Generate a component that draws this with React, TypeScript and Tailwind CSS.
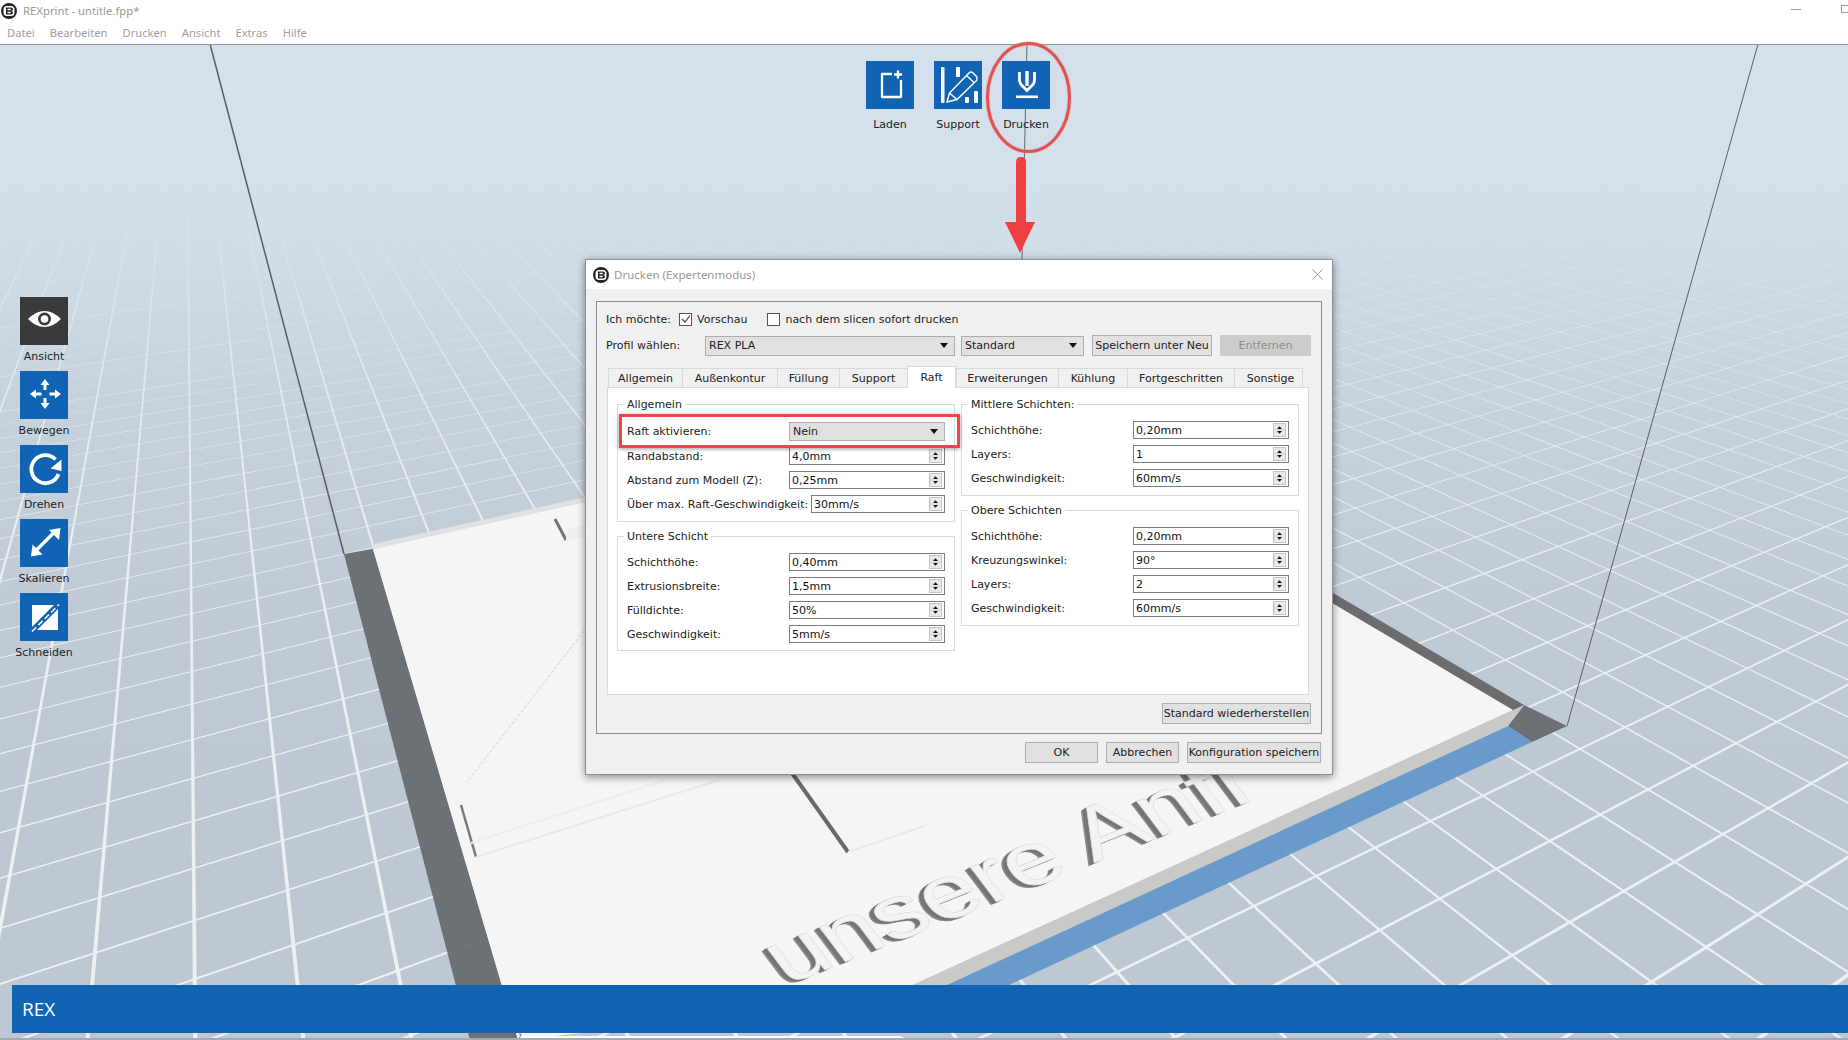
import React from "react";

const VB = { x: 185, y: -85 };
const VA = { x: 3387, y: -122 };
const refY = (t: number) => 790 - 0.0116 * (t - 190);

function wedge(v: { x: number; y: number }, t: number, w: number) {
  const pts = [t - w / 2, t + w / 2].map((x) => {
    const y = refY(x);
    return [v.x + (x - v.x) * 4, v.y + (y - v.y) * 4];
  });
  return `${v.x},${v.y} ${pts[0][0]},${pts[0][1]} ${pts[1][0]},${pts[1][1]}`;
}

const linesB = Array.from({ length: 110 }, (_, i) => 193 + 84 * (i - 20));
const linesA = Array.from({ length: 90 }, (_, i) => 456 + 153 * (i - 70));
const LETTERING = "unsere Anfr";

function Scene() {
  return (
    <svg className="absolute inset-0" width="1848" height="1040" viewBox="0 0 1848 1040">
      <defs>
        <linearGradient id="fog" gradientUnits="userSpaceOnUse" x1="0" y1="0" x2="0" y2="1040">
          <stop offset="0.16" stopColor="#d4e0ec" stopOpacity="1" />
          <stop offset="0.24" stopColor="#d4e0ec" stopOpacity="0.85" />
          <stop offset="0.38" stopColor="#d4e0ec" stopOpacity="0.42" />
          <stop offset="0.58" stopColor="#d4e0ec" stopOpacity="0.1" />
          <stop offset="0.78" stopColor="#d4e0ec" stopOpacity="0" />
        </linearGradient>
      </defs>
      <rect width="1848" height="1040" fill="#bdc8d2" />
      <g fill="#eef1f3">
        {linesB.map((t) => (
          <polygon key={`b${t}`} points={wedge(VB, t, 3.2)} />
        ))}
        {linesA.map((t) => (
          <polygon key={`a${t}`} points={wedge(VA, t, 5)} />
        ))}
      </g>
      <rect width="1848" height="1040" fill="url(#fog)" />

      {/* shadow bands under the plate */}
      <polygon points="344,554 373,549 518,1040 470,1040" fill="#65696d" opacity="0.92" />
      <polygon points="1333,593 1524,705 1513,711 1333,605" fill="#6a6c70" />
      <polygon points="1524,705 1567,726 1532,742 1508,726" fill="#676b70" opacity="0.95" />
      <polygon points="1508,726 1532,742 1009,985 924,985 880,1010" fill="#6196cb" opacity="0.92" />

      {/* plate */}
      <polygon points="373,549 1004,409 1513,710 880,1000 518,1040" fill="#f5f5f5" />
      <polygon points="373,544 1000,405 1004,409 373,549" fill="#dfe1e2" />
      <polygon points="1513,710 1524,705 1508,726 880,1016 880,1000" fill="#c9c9c7" />
      <polygon points="518,1036 900,1036 910,1040 518,1040" fill="#ffffff" />

      {/* shapes on the plate */}
      <line x1="555" y1="519" x2="566" y2="540" stroke="#707274" strokeWidth="3" />
      <polygon points="566,530 590,522 590,536 566,541" fill="#eeeeee" />
      <line x1="584" y1="631" x2="467" y2="782" stroke="#cfcfcf" strokeWidth="1" strokeDasharray="3 2" />
      <line x1="461" y1="805" x2="476" y2="857" stroke="#77797b" strokeWidth="2.500" />
      <line x1="476" y1="857" x2="719" y2="780" stroke="#e9e9e9" strokeWidth="2" />
      <line x1="471" y1="843" x2="666" y2="780" stroke="#ededed" strokeWidth="2" />
      <line x1="792" y1="773" x2="848" y2="852" stroke="#67696b" strokeWidth="4" />
      <line x1="848" y1="852" x2="924" y2="826" stroke="#eaeaea" strokeWidth="2" />

      {/* raised lettering */}
      <g fontFamily="'Liberation Sans', sans-serif" fontSize="60" transform="matrix(1.56,-0.62,0.82,1.09,787,985)">
        <text x="-4" y="0.600" fill="#8a8c8e">{LETTERING}</text>
        <text x="-3" y="0.400" fill="#747678">{LETTERING}</text>
        <text x="-2" y="0.200" fill="#747678">{LETTERING}</text>
        <text x="-1" y="0" fill="#747678">{LETTERING}</text>
        <text x="0" y="0" fill="#f3f3f3" stroke="#e2e2e2" strokeWidth="0.500">{LETTERING}</text>
      </g>

      {/* build volume edges */}
      <line x1="210" y1="44" x2="344" y2="554" stroke="#5a5e62" strokeWidth="1.500" />
      <line x1="1758" y1="44" x2="1567" y2="726" stroke="#5a5e62" strokeWidth="1" />
      <line x1="1027" y1="44" x2="1022" y2="259" stroke="#666a6e" strokeWidth="1" />
    </svg>
  );
}

function Logo({ className }: { className: string }) {
  return (
    <svg className={className} viewBox="0 0 16 16">
      <circle cx="8" cy="8" r="8" fill="#222" />
      <rect x="2.500" y="3" width="11" height="10" rx="3.500" fill="#fff" />
      <path d="M5 4.400h5q2 0 2 1.800t-2 1.800q2 0 2 1.800t-2 1.800H5zM6.600 5.800v1.400h3.200v-1.400zM6.600 8.800v1.400h3.200V8.800z" fill="#222" fillRule="evenodd" />
    </svg>
  );
}

const icons: Record<string, React.ReactNode> = {
  Laden: (
    <g fill="none" stroke="#fff" strokeWidth="2.300">
      <path d="M26 13H16v23h19V19" strokeLinejoin="round" />
      <path d="M32 9.500v8M28 13.500h8" />
    </g>
  ),
  Support: (
    <g>
      <g fill="#fff">
        <rect x="7" y="6" width="3.500" height="36" rx="1" />
        <rect x="22" y="6" width="4" height="10" rx="1" />
        <rect x="31" y="36" width="4" height="6" rx="1" />
        <rect x="40" y="30" width="4" height="12" rx="1" />
      </g>
      <path d="M13 41l2.500-9L35 12q2-2 4 0l3.500 3.500q1.500 2 0 4L23 38.500zM15.500 32l7.500 6.500M32.500 14.500l7.500 7" fill="none" stroke="#fff" strokeWidth="1.400" />
    </g>
  ),
  Drucken: (
    <g>
      <path d="M17.500 11v8q0 4 3.500 6.500l4 4 4-4q3.500-2.500 3.500-6.500v-8" fill="none" stroke="#fff" strokeWidth="2.800" />
      <path d="M25 10v15" stroke="#fff" strokeWidth="3.400" />
      <rect x="14" y="34.500" width="22" height="2.600" fill="#fff" />
    </g>
  ),
  Ansicht: (
    <g>
      <path d="M8 22q8-8 16.500-8T41 22q-8 8-16.500 8T8 22z" fill="#fff" />
      <circle cx="24.500" cy="22" r="6.500" fill="#3a3a3a" />
      <circle cx="24.500" cy="22" r="3.800" fill="#fff" />
    </g>
  ),
  Bewegen: (
    <g fill="#fff">
      <path d="M25 8l4.500 6h-3v5h-3v-5h-3z" />
      <path d="M25 38l4.500-6h-3v-5h-3v5h-3z" />
      <path d="M10 23l6-4.500v3h5.500v3H16v3z" />
      <path d="M41 23l-6-4.500v3h-5.500v3H35v3z" />
    </g>
  ),
  Drehen: (
    <g>
      <path d="M35.500 14.500A14 14 0 1 0 38.500 29" fill="none" stroke="#fff" strokeWidth="3.800" />
      <path d="M41.500 14.500v11.500l-11-2.500z" fill="#fff" />
    </g>
  ),
  Skalieren: (
    <g fill="#fff">
      <path d="M15 32.500l19-19" stroke="#fff" strokeWidth="3.400" />
      <path d="M40.500 9l-1.500 12-10-10z" />
      <path d="M11 37.500l1.500-12 10 10z" />
    </g>
  ),
  Schneiden: (
    <g>
      <path d="M12 12h22L12 34z" fill="#fff" />
      <path d="M38 16v21H17z" fill="#fff" />
      <path d="M12 38.500L39 11.500" stroke="#fff" strokeWidth="1.500" strokeDasharray="6 3" fill="none" />
    </g>
  ),
};

function Tool({ name, dark, mt }: { name: string; dark?: boolean; mt: string }) {
  return (
    <div className="flex flex-col items-center w-[48px]">
      <svg className={dark ? "block w-[48px] h-[48px] bg-[#3a3a3a]" : "block w-[48px] h-[48px] bg-[#1164b4]"} viewBox="0 0 48 48">
        {icons[name]}
      </svg>
      <span className={`whitespace-nowrap text-[11px] leading-[14px] text-[#222] ${mt}`}>{name}</span>
    </div>
  );
}

function Arrow() {
  return (
    <svg className="w-[13px] h-[14px] block bg-[#e9e9e9] border border-[#c6c6c6] shrink-0" viewBox="0 0 11 12">
      <path d="M5.500 2.200L8 5H3z" fill="#111" />
      <path d="M5.500 9.800L8 7H3z" fill="#111" />
      <path d="M0 6h11" stroke="#cfcfcf" strokeWidth="0.600" />
    </svg>
  );
}

function Spin({ value, wide }: { value: string; wide?: boolean }) {
  return (
    <div className={`${wide ? "w-[156px]" : "w-[134px]"} h-[18px] flex items-center justify-between border border-[#7d7d7d] bg-white pl-[2px] pr-[2px] text-[#111]`}>
      <span>{value}</span>
      <Arrow />
    </div>
  );
}

function Row({ label, value, narrow }: { label: string; value: string; narrow?: boolean }) {
  return (
    <div className="flex items-center justify-between h-[18px]">
      <span className="whitespace-nowrap">{label}</span>
      <Spin value={value} wide={!narrow} />
    </div>
  );
}

function Caret() {
  return (
    <svg className="w-[8px] h-[5px] block" viewBox="0 0 8 5">
      <path d="M0 0h8L4 5z" fill="#111" />
    </svg>
  );
}

function Group({ title, h, pt, children }: { title: string; h: string; pt: string; children: React.ReactNode }) {
  return (
    <div className={`relative border border-[#dadada] ${h} ${pt} px-[9px] flex flex-col gap-[6px]`}>
      <span className="absolute left-[6px] -top-[7px] bg-white px-[3px] leading-[13px] whitespace-nowrap">{title}</span>
      {children}
    </div>
  );
}

const tabs: [string, string][] = [
  ["Allgemein", "w-[74px]"],
  ["Außenkontur", "w-[95px]"],
  ["Füllung", "w-[62px]"],
  ["Support", "w-[68px]"],
  ["Raft", "w-[49px]"],
  ["Erweiterungen", "w-[102px]"],
  ["Kühlung", "w-[69px]"],
  ["Fortgeschritten", "w-[107px]"],
  ["Sonstige", "w-[69px] pl-[4px]"],
];

function Btn({ w, children, off }: { w: string; children: React.ReactNode; off?: boolean }) {
  return (
    <div
      className={`${w} h-[21px] flex items-center justify-center whitespace-nowrap ${
        off ? "bg-[#cccccc] text-[#8e8e8e]" : "bg-[#e1e1e1] border border-[#adadad] text-[#222]"
      }`}
    >
      {children}
    </div>
  );
}

function Dialog() {
  return (
    <div className="absolute left-[585px] top-[259px] w-[748px] h-[516px] border border-[#8a939b] bg-[#f0f0f0] shadow-[0_2px_8px_rgba(0,0,0,0.45)] text-[#222] text-[11px] leading-none">
      <div className="h-[29px] bg-white flex items-center pl-[7px] pr-[9px]">
        <Logo className="w-[16px] h-[16px] mr-[5px] block" />
        <span className="text-[#9a9a9a] text-[11.500px] font-['Noto_Sans',sans-serif]">Drucken (Expertenmodus)</span>
        <svg className="ml-auto w-[11px] h-[11px] block" viewBox="0 0 11 11">
          <path d="M0.500 0.500l10 10M10.500 0.500l-10 10" stroke="#777" strokeWidth="0.800" />
        </svg>
      </div>
      <div className="mx-[10px] mt-[12px] border border-[#8c8c8c] pb-[9px]">
        <div className="mt-[9px] h-[16px] pl-[9px] flex items-center">
          <span className="mr-[8px]">Ich möchte:</span>
          <div className="w-[13px] h-[13px] border border-[#555] bg-white flex items-center justify-center">
            <svg className="w-[10px] h-[10px] block" viewBox="0 0 10 10">
              <path d="M1 5l3 3 5-6.500" fill="none" stroke="#444" strokeWidth="1.200" />
            </svg>
          </div>
          <span className="ml-[5px] mr-[20px]">Vorschau</span>
          <div className="w-[13px] h-[13px] border border-[#555] bg-white" />
          <span className="ml-[5px]">nach dem slicen sofort drucken</span>
        </div>
        <div className="mt-[8px] h-[21px] pl-[9px] flex items-center">
          <span className="w-[99px]">Profil wählen:</span>
          <div className="w-[250px] h-[20px] bg-[#e1e1e1] border border-[#adadad] flex items-center justify-between pl-[3px] pr-[6px]">
            <span>REX PLA</span>
            <Caret />
          </div>
          <div className="ml-[6px] w-[123px] h-[20px] bg-[#e1e1e1] border border-[#adadad] flex items-center justify-between pl-[3px] pr-[6px]">
            <span>Standard</span>
            <Caret />
          </div>
          <div className="ml-[8px]">
            <Btn w="w-[120px]">Speichern unter Neu</Btn>
          </div>
          <div className="ml-[8px]">
            <Btn w="w-[91px]" off>
              Entfernen
            </Btn>
          </div>
        </div>
        <div className="mt-[10px] h-[21px] pl-[11px] flex items-end relative z-10">
          {tabs.map(([t, w]) =>
            t === "Raft" ? (
              <div key={t} className={`${w} h-[22px] -mb-[1px] bg-white border border-b-0 border-[#d9d9d9] flex items-center justify-center`}>
                {t}
              </div>
            ) : (
              <div key={t} className={`${w} h-[19px] bg-[#f0f0f0] border border-b-0 border-r-0 last:border-r border-[#d9d9d9] flex items-center justify-center`}>
                {t}
              </div>
            )
          )}
        </div>
        <div className="ml-[10px] w-[702px] h-[308px] bg-white border border-[#d9d9d9] px-[9px] pt-[16px] grid grid-cols-[338px_338px] gap-x-[6px]">
          <div className="flex flex-col gap-[14px]">
            <Group title="Allgemein" h="h-[118px]" pt="pt-[17px]">
              <div className="flex items-center justify-between h-[19px]">
                <span>Raft aktivieren:</span>
                <div className="w-[156px] h-[19px] bg-[#e1e1e1] border border-[#adadad] flex items-center justify-between pl-[3px] pr-[6px]">
                  <span>Nein</span>
                  <Caret />
                </div>
              </div>
              <Row label="Randabstand:" value="4,0mm" />
              <Row label="Abstand zum Modell (Z):" value="0,25mm" />
              <Row label="Über max. Raft-Geschwindigkeit:" value="30mm/s" narrow />
            </Group>
            <Group title="Untere Schicht" h="h-[115px]" pt="pt-[16px]">
              <Row label="Schichthöhe:" value="0,40mm" />
              <Row label="Extrusionsbreite:" value="1,5mm" />
              <Row label="Fülldichte:" value="50%" />
              <Row label="Geschwindigkeit:" value="5mm/s" />
            </Group>
          </div>
          <div className="flex flex-col gap-[14px]">
            <Group title="Mittlere Schichten:" h="h-[92px]" pt="pt-[16px]">
              <Row label="Schichthöhe:" value="0,20mm" />
              <Row label="Layers:" value="1" />
              <Row label="Geschwindigkeit:" value="60mm/s" />
            </Group>
            <Group title="Obere Schichten" h="h-[116px]" pt="pt-[16px]">
              <Row label="Schichthöhe:" value="0,20mm" />
              <Row label="Kreuzungswinkel:" value="90°" />
              <Row label="Layers:" value="2" />
              <Row label="Geschwindigkeit:" value="60mm/s" />
            </Group>
          </div>
        </div>
        <div className="mt-[8px] flex justify-end pr-[10px]">
          <Btn w="w-[149px]">Standard wiederherstellen</Btn>
        </div>
      </div>
      <div className="mt-[8px] pr-[11px] flex justify-end gap-[8px]">
        <Btn w="w-[73px]">OK</Btn>
        <Btn w="w-[73px]">Abbrechen</Btn>
        <Btn w="w-[134px]">Konfiguration speichern</Btn>
      </div>
      <div className="absolute left-[33px] top-[154px] w-[341px] h-[34px] border-[3px] border-[#e8484a] shadow-[0_1px_4px_rgba(0,0,0,0.4)]" />
    </div>
  );
}

export default function App() {
  return (
    <div className="relative w-[1848px] h-[1040px] overflow-hidden font-['DejaVu_Sans',sans-serif] flex flex-col">
      <Scene />
      <header className="relative h-[45px] bg-white border-b border-[#8b98a4] shrink-0 font-['Noto_Sans',sans-serif]">
        <div className="h-[22px] flex items-center pl-[1px] text-[11.300px] text-[#9a9a9a]">
          <Logo className="w-[16px] h-[16px] block mr-[6px]" />
          <span>REXprint - untitle.fpp*</span>
          <div className="ml-auto w-[10px] h-px bg-[#999] mr-[40px] -mt-[4px]" />
          <div className="w-[7px] h-[8px] border border-r-0 border-[#999] -mt-[4px]" />
        </div>
        <nav className="h-[22px] flex items-center text-[11.200px] text-[#9f9f9f] pl-[7px] gap-[15px]">
          <span>Datei</span>
          <span>Bearbeiten</span>
          <span>Drucken</span>
          <span>Ansicht</span>
          <span>Extras</span>
          <span>Hilfe</span>
        </nav>
      </header>
      <main className="relative flex-1 flex flex-col justify-end">
        <div className="ml-[12px] mb-[7px] h-[48px] bg-[#1164b4] flex items-center pl-[10px] text-white text-[19px] font-['Open_Sans',sans-serif]">
          REX
        </div>
        <div className="absolute left-[518px] bottom-[1px] text-[6px] leading-none text-[#2222dd]">7</div>
        <div className="absolute left-0 right-0 bottom-0 h-[2px] bg-[#a3acb4]" />
      </main>
      <div className="absolute left-[866px] top-[61px] flex gap-[20px]">
        <Tool name="Laden" mt="mt-[9px]" />
        <Tool name="Support" mt="mt-[9px]" />
        <Tool name="Drucken" mt="mt-[9px]" />
      </div>
      <div className="absolute left-[20px] top-[297px] flex flex-col gap-[7px]">
        <Tool name="Ansicht" dark mt="mt-[5px]" />
        <Tool name="Bewegen" mt="mt-[5px]" />
        <Tool name="Drehen" mt="mt-[5px]" />
        <Tool name="Skalieren" mt="mt-[5px]" />
        <Tool name="Schneiden" mt="mt-[5px]" />
      </div>
      <Dialog />
      <svg className="absolute left-[980px] top-[38px] w-[100px] h-[220px] pointer-events-none" viewBox="0 0 100 220">
        <ellipse cx="48.500" cy="59.500" rx="41" ry="54" fill="none" stroke="#c9b0b4" strokeWidth="4.500" opacity="0.5" />
        <ellipse cx="48.500" cy="59.500" rx="41" ry="54" fill="none" stroke="#e8504f" strokeWidth="3" />
        <path d="M36 124q0-5 5-5t5 5v60h9l-15 31-15-31h11z" fill="#f03f40" />
      </svg>
    </div>
  );
}
